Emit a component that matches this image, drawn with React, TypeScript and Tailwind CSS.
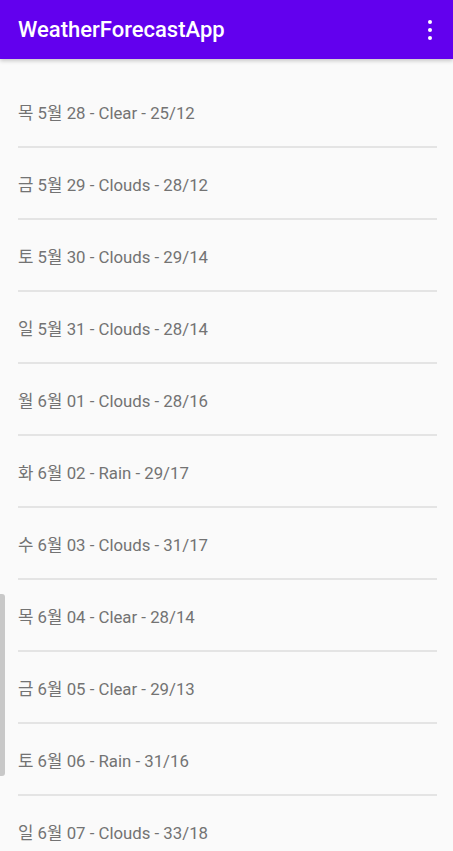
const forecasts = [
  '목 5월 28 - Clear - 25/12',
  '금 5월 29 - Clouds - 28/12',
  '토 5월 30 - Clouds - 29/14',
  '일 5월 31 - Clouds - 28/14',
  '월 6월 01 - Clouds - 28/16',
  '화 6월 02 - Rain - 29/17',
  '수 6월 03 - Clouds - 31/17',
  '목 6월 04 - Clear - 28/14',
  '금 6월 05 - Clear - 29/13',
  '토 6월 06 - Rain - 31/16',
  '일 6월 07 - Clouds - 33/18',
]

export default function App() {
  return (
    <div
      className="relative h-[851px] w-[453px] overflow-hidden bg-[#fafafa]"
      style={{ fontFamily: 'Roboto, "Noto Sans CJK KR", sans-serif' }}
    >
      {/* App bar */}
      <div className="relative z-10 flex h-[59px] items-center justify-between bg-[#6200ee] pl-[18px] pr-[9px] shadow-[0_2px_4px_rgba(0,0,0,0.2)]">
        <h1 className="text-[22px] font-medium text-white">WeatherForecastApp</h1>
        <div className="flex w-[28px] flex-col items-center gap-[4px]">
          <span className="h-[4px] w-[4px] rounded-full bg-white" />
          <span className="h-[4px] w-[4px] rounded-full bg-white" />
          <span className="h-[4px] w-[4px] rounded-full bg-white" />
        </div>
      </div>

      {/* Forecast list */}
      <ul className="pt-[17px]">
        {forecasts.map((f) => (
          <li key={f} className="pl-[18px] pr-[16px]">
            <div className="pt-[27px] pb-[23px] text-[16.8px] leading-[20px] text-[#737373]">{f}</div>
            <div className="h-[2px] bg-[#e4e4e4]" />
          </li>
        ))}
      </ul>

      {/* scroll thumb */}
      <div className="absolute left-0 top-[594px] h-[182px] w-[5px] rounded-r-[3px] bg-[#c8c8c8]" />
    </div>
  )
}
